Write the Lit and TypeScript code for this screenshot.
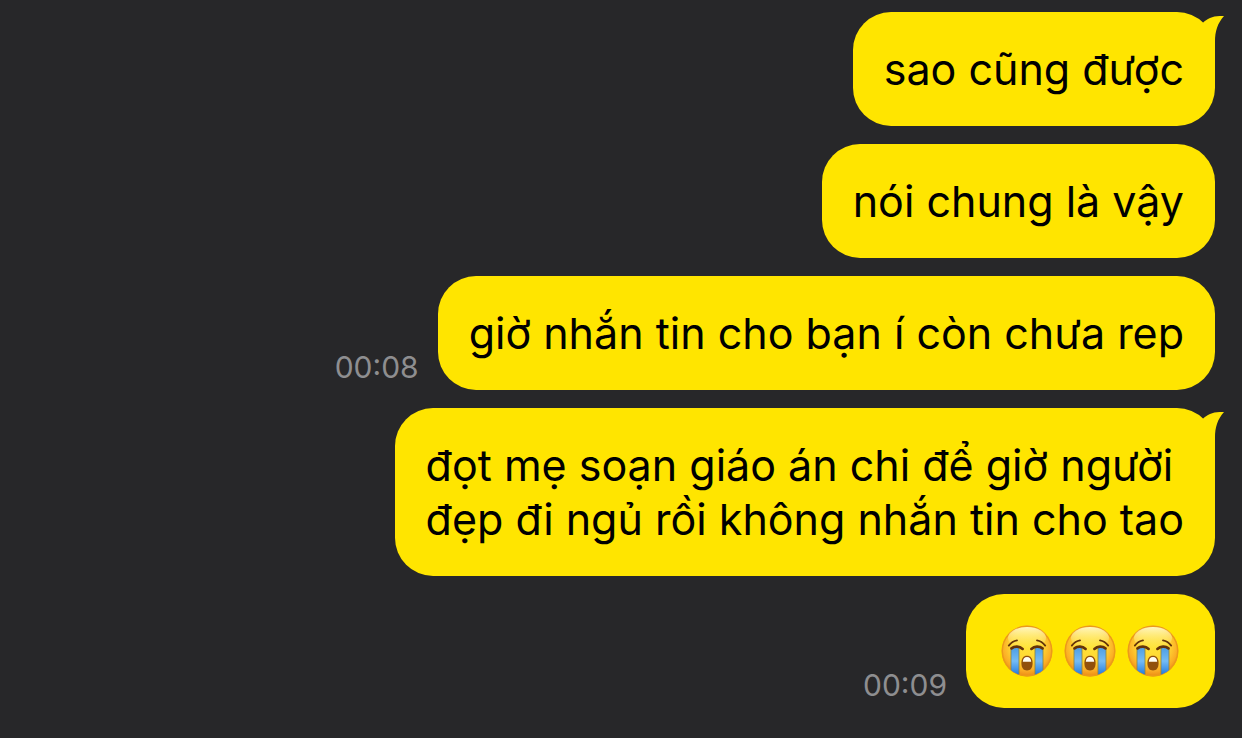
import { LitElement, html, css, nothing } from "lit";
import { customElement, property } from "lit/decorators.js";

interface Message {
  text?: string;
  sobs?: number;
  time?: string;
  tail?: boolean;
}

const MESSAGES: Message[] = [
  { text: "sao cũng được", tail: true },
  { text: "nói chung là vậy" },
  { text: "giờ nhắn tin cho bạn í còn chưa rep", time: "00:08" },
  { text: "đọt mẹ soạn giáo án chi để giờ người\nđẹp đi ngủ rồi không nhắn tin cho tao", tail: true },
  { sobs: 3, time: "00:09" },
];

/* Loudly crying face */
@customElement("sob-face")
export class SobFace extends LitElement {
  static styles = css`
    :host {
      display: flex;
      align-items: center;
      box-sizing: border-box;
      width: 63px;
      height: 54px;
      padding-left: 5px;
    }
    .face {
      display: block;
      width: 52px;
      height: 52px;
    }
  `;

  render() {
    return html`<svg class="face" viewBox="0 0 52 52" role="img" aria-label="😭">
      <defs>
        <radialGradient id="skin" cx="0.5" cy="0.4" r="0.62">
          <stop offset="0" stop-color="#ffe437" />
          <stop offset="0.5" stop-color="#ffd633" />
          <stop offset="0.78" stop-color="#fbae25" />
          <stop offset="1" stop-color="#ea8312" />
        </radialGradient>
        <linearGradient id="shine" x1="0" y1="0" x2="0" y2="1">
          <stop offset="0" stop-color="#fffbd0" stop-opacity="0.9" />
          <stop offset="1" stop-color="#fff27a" stop-opacity="0" />
        </linearGradient>
        <linearGradient id="tear" x1="0" y1="0" x2="0" y2="1">
          <stop offset="0" stop-color="#4f9fe4" />
          <stop offset="0.45" stop-color="#74bbf4" />
          <stop offset="1" stop-color="#1670da" />
        </linearGradient>
        <clipPath id="round"><circle cx="26" cy="26" r="25" /></clipPath>
      </defs>
      <circle cx="26" cy="26" r="25.4" fill="url(#skin)" />
      <circle cx="26" cy="26" r="24.7" fill="none" stroke="#ec9a1a" stroke-width="1.4" />
      <ellipse cx="26" cy="13" rx="19" ry="11" fill="url(#shine)" />
      <g clip-path="url(#round)">
        <path d="M10 23H18V52H10Z M34 23H42V52H34Z" fill="url(#tear)" />
        <path d="M10 23V52M18 23V52M34 23V52M42 23V52" stroke="#85824a" stroke-opacity="0.8" stroke-width="1" />
      </g>
      <g fill="none" stroke="#64330a" stroke-linecap="round">
        <path d="M7.8 20.6C10 17.8 12.5 16 16 15.4M44.2 20.6C42 17.8 39.500 16 36 15.4" stroke-width="1.8" />
        <path d="M10.5 23.4C13.5 21 18.5 21 21.6 23.9M41.5 23.4C38.5 21 33.5 21 30.4 23.9" stroke-width="2.7" />
      </g>
      <path d="M26 30.8C29.6 30.8 31.6 33.5 31.6 38C31.6 43 29.6 45.400 26 45.4C22.4 45.4 20.4 43 20.4 38C20.4 33.5 22.4 30.8 26 30.8Z" fill="#91500c" />
      <path d="M26 32C28.6 32 30 33.6 30.2 36.8H21.8C22 33.6 23.4 32 26 32Z" fill="#fffdf2" />
    </svg>`;
  }
}

@customElement("chat-message")
export class ChatMessage extends LitElement {
  @property({ attribute: false }) message: Message = {};

  static styles = css`
    :host {
      display: flex;
      justify-content: flex-end;
      align-items: flex-end;
      gap: 19px;
    }
    .time {
      padding-bottom: 4px;
      color: #8e8e90;
      font-size: 30px;
      line-height: 38px;
    }
    .bubble {
      position: relative;
      box-sizing: border-box;
      padding: 30px 31px;
      border-radius: 38px;
      background: #ffe500;
      color: #000;
      font-size: 43px;
      line-height: 54px;
      white-space: pre-line;
    }
    .sobs {
      display: flex;
      padding: 30px;
    }
    .tail {
      position: absolute;
      top: 4px;
      right: -9px;
      width: 24px;
      height: 36px;
      fill: #ffe500;
    }
  `;

  render() {
    const { text, sobs, time, tail } = this.message;
    return html`
      ${time ? html`<time class="time">${time}</time>` : nothing}
      ${sobs
        ? html`<div class="bubble sobs">${Array.from({ length: sobs }, () => html`<sob-face></sob-face>`)}</div>`
        : html`<div class="bubble">${text}${tail
            ? html`<svg class="tail" viewBox="0 0 24 36" aria-hidden="true">
                <path d="M0 10L2.5 7.2C8 1.8 14 -0.4 24 0C17.5 7.5 15 15 15 26V36H0Z" />
              </svg>`
            : nothing}</div>`}
    `;
  }
}

@customElement("app-root")
export class AppRoot extends LitElement {
  static styles = css`
    :host {
      display: block;
      box-sizing: border-box;
      min-height: 100vh;
      background: #272729;
      font-family: Inter, "Noto Sans", sans-serif;
    }
    .chat {
      display: flex;
      flex-direction: column;
      gap: 18px;
      padding: 12px 27px 30px;
    }
  `;

  render() {
    return html`<main class="chat">
      ${MESSAGES.map((m) => html`<chat-message .message=${m}></chat-message>`)}
    </main>`;
  }
}
